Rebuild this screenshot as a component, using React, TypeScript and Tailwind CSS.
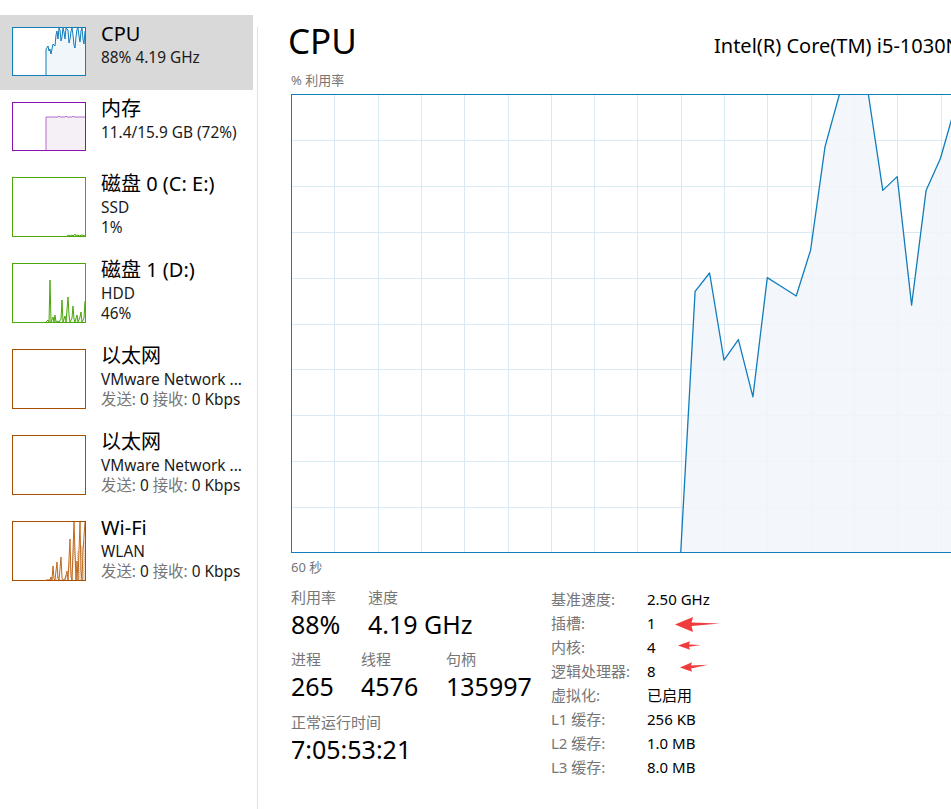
import clsx from "clsx";
import type { ReactNode } from "react";

const CHART_W = 866;
const CHART_H = 459;

// one sample per second, 60 s across the chart
const cpuHistory = [
  0, 0, 0, 0, 0, 0, 0, 0, 0, 0, 0, 0, 0, 0, 0, 0, 0, 0, 0, 0, 0, 0, 0, 0, 0, 0, 0,
  0, 57, 61, 42, 46.5, 34, 60, 58, 56, 66, 88.5, 100, 100, 100, 79, 82, 54, 79, 86,
  97, 95, 90, 93, 88, 97, 91, 86, 94, 89, 92, 87, 90, 88, 88,
];

function Thumb({
  color,
  h,
  children,
}: {
  color: string;
  h: number;
  children?: ReactNode;
}) {
  return (
    <svg width={74} height={h} className="block">
      <rect x={0} y={0} width={74} height={h} fill="#ffffff" />
      {children}
      <rect x={0.5} y={0.5} width={73} height={h - 1} fill="none" stroke={color} />
    </svg>
  );
}

const cpuThumb =
  "34,48 34,22 36,19 37,24 38,22 39,27 41,17 43,19 44,8 45,4 46,12 47,1 48,3 49,14 50,10 51,1 52,5 53,12 54,1 56,3 57,16 58,12 59,4 60,1 61,8 62,18 63,21 64,10 65,2 66,1 67,9 68,15 69,4 70,1 71,12 72,17 73,4";
const memThumb = "34,48 34,15 46,15 47,14 48,15 53,15 54,14 55,15 60,15 61,14 62,15 73,15";
const disk0Thumb = "55,59 57,58 58,59 60,58 61,59 63,57 64,59 66,58 67,59 70,58 73,59";
const disk1Thumb =
  "34,59 36,57 37,59 38,17 39,59 41,54 42,59 43,52 44,59 46,58 47,59 49,56 50,37 51,59 53,53 54,59 56,34 57,52 58,59 60,55 61,43 62,56 63,59 65,52 66,59 68,54 69,49 70,59 72,55 73,38";
const wifiThumb =
  "34,59 38,59 39,56 40,59 41,45 42,58 43,59 45,41 46,58 47,59 49,36 50,57 51,59 53,59 55,50 56,59 58,18 59,56 60,59 62,1 63,30 64,59 65,40 66,59 68,1 69,50 70,59 71,30 73,1";
const wifiThumb2 = "34,59 44,59 46,55 48,59 52,59 54,54 56,59 58,40 60,59 62,20 64,59 66,30 68,59 70,25 72,59 73,20";

function NavItem({
  selected,
  tall,
  thumb,
  title,
  children,
}: {
  selected?: boolean;
  tall?: boolean;
  thumb: ReactNode;
  title: string;
  children: ReactNode;
}) {
  return (
    <div
      className={clsx(
        "flex items-start pl-3",
        tall ? "h-[86px]" : "h-[75px]",
        selected && "bg-[#d9d9d9]"
      )}
    >
      <div className="mt-3 shrink-0">{thumb}</div>
      <div className="ml-[15px] min-w-0 pt-[7px]">
        <div className="text-[20px] leading-6 text-black whitespace-nowrap">{title}</div>
        <div className="mt-[2px] text-[15.4px] leading-5 text-[#1a1a1a] whitespace-nowrap">
          {children}
        </div>
      </div>
    </div>
  );
}

function NetLine() {
  return (
    <div>
      <span className="text-[#767676]">发送:</span> 0 <span className="text-[#767676]">接收:</span> 0 Kbps
    </div>
  );
}

function CpuChart() {
  const step = CHART_W / 60;
  const pts = cpuHistory.map((p, i) => [i * step, CHART_H - (p / 100) * CHART_H]);
  const line = pts.map(([x, y]) => `${x.toFixed(1)},${y.toFixed(1)}`).join(" ");
  const area = `0,${CHART_H} ${line} ${CHART_W},${CHART_H}`;
  const cols = Array.from({ length: 19 }, (_, k) => Math.round(((k + 1) * CHART_W) / 20) + 0.5);
  const rows = Array.from({ length: 9 }, (_, k) => Math.round(((k + 1) * CHART_H) / 10) + 0.5);

  return (
    <svg width={CHART_W} height={CHART_H} className="block shrink-0">
      <rect width={CHART_W} height={CHART_H} fill="#ffffff" />
      {cols.map((x) => (
        <line key={`c${x}`} x1={x} x2={x} y1={0} y2={CHART_H} stroke="#d9eaf4" />
      ))}
      {rows.map((y) => (
        <line key={`r${y}`} x1={0} x2={CHART_W} y1={y} y2={y} stroke="#d9eaf4" />
      ))}
      <polygon points={area} fill="#f1f6fa" fillOpacity={0.85} />
      <polyline points={line} fill="none" stroke="#117dbb" strokeWidth={1.3} strokeLinejoin="round" />
      <rect x={0.5} y={0.5} width={CHART_W - 1} height={CHART_H - 1} fill="none" stroke="#117dbb" />
    </svg>
  );
}

function Stat({ label, value, w }: { label: string; value: string; w?: string }) {
  return (
    <div className={w}>
      <div className="text-[15px] leading-[21px] text-[#767676]">{label}</div>
      <div className="text-[25px] leading-8 text-black whitespace-nowrap">{value}</div>
    </div>
  );
}

const specs: [string, string][] = [
  ["基准速度:", "2.50 GHz"],
  ["插槽:", "1"],
  ["内核:", "4"],
  ["逻辑处理器:", "8"],
  ["虚拟化:", "已启用"],
  ["L1 缓存:", "256 KB"],
  ["L2 缓存:", "1.0 MB"],
  ["L3 缓存:", "8.0 MB"],
];

export default function App() {
  return (
    <div className="relative flex h-[809px] w-[951px] overflow-hidden bg-white font-['Noto_Sans','Noto_Sans_CJK_SC',sans-serif]">
      {/* sidebar */}
      <div className="w-[253px] shrink-0 pt-[15px]">
        <NavItem
          selected
          title="CPU"
          thumb={
            <Thumb color="#117dbb" h={49}>
              <polygon points={`${cpuThumb} 73,48`} fill="#f1f6fa" />
              <polyline points={cpuThumb} fill="none" stroke="#117dbb" strokeWidth={1} />
            </Thumb>
          }
        >
          88% 4.19 GHz
        </NavItem>
        <NavItem
          title="内存"
          thumb={
            <Thumb color="#8b12ae" h={49}>
              <polygon points={`${memThumb} 73,48`} fill="#f4f0f5" />
              <polyline points={memThumb} fill="none" stroke="#8b12ae" strokeWidth={1} opacity={0.6} />
            </Thumb>
          }
        >
          11.4/15.9 GB (72%)
        </NavItem>
        <NavItem
          tall
          title="磁盘 0 (C: E:)"
          thumb={
            <Thumb color="#4da60c" h={60}>
              <polyline points={disk0Thumb} fill="none" stroke="#4da60c" strokeWidth={1} />
            </Thumb>
          }
        >
          <div>SSD</div>
          <div>1%</div>
        </NavItem>
        <NavItem
          tall
          title="磁盘 1 (D:)"
          thumb={
            <Thumb color="#4da60c" h={60}>
              <polygon points={`${disk1Thumb} 73,59`} fill="#eff7e9" />
              <polyline points={disk1Thumb} fill="none" stroke="#4da60c" strokeWidth={1} />
            </Thumb>
          }
        >
          <div>HDD</div>
          <div>46%</div>
        </NavItem>
        <NavItem tall title="以太网" thumb={<Thumb color="#a74f01" h={60} />}>
          <div>VMware Network ...</div>
          <NetLine />
        </NavItem>
        <NavItem tall title="以太网" thumb={<Thumb color="#a74f01" h={60} />}>
          <div>VMware Network ...</div>
          <NetLine />
        </NavItem>
        <NavItem
          tall
          title="Wi-Fi"
          thumb={
            <Thumb color="#a74f01" h={60}>
              <polyline points={wifiThumb2} fill="none" stroke="#d9a275" strokeWidth={1} strokeDasharray="1 1" />
              <polyline points={wifiThumb} fill="none" stroke="#c06a1e" strokeWidth={1} />
            </Thumb>
          }
        >
          <div>WLAN</div>
          <NetLine />
        </NavItem>
      </div>

      <div className="ml-1 mt-[27px] w-px shrink-0 self-stretch bg-[#e2e2e2]" />

      {/* details panel */}
      <div className="flex shrink-0 flex-col pl-[33px] pt-[19px]">
        <div className="flex items-start">
          <div className="-ml-[3px] w-[426px] text-[35px] leading-[44px] text-black">CPU</div>
          <div className="mt-[15px] whitespace-nowrap text-[20px] leading-6 text-black">
            Intel(R) Core(TM) i5-1030NG7 CPU @ 1.10GHz
          </div>
        </div>
        <div className="mt-[9px] text-[13px] leading-4 text-[#767676]">% 利用率</div>
        <div className="mt-[6px]">
          <CpuChart />
        </div>
        <div className="mt-[6px] text-[13px] leading-4 text-[#767676]">60 秒</div>

        <div className="mt-3 flex">
          <div className="w-[260px] shrink-0">
            <div className="flex">
              <Stat label="利用率" value="88%" w="w-[77px]" />
              <Stat label="速度" value="4.19 GHz" />
            </div>
            <div className="mt-[9px] flex">
              <Stat label="进程" value="265" w="w-[70px]" />
              <Stat label="线程" value="4576" w="w-[85px]" />
              <Stat label="句柄" value="135997" />
            </div>
            <div className="mt-[10px]">
              <Stat label="正常运行时间" value="7:05:53:21" />
            </div>
          </div>
          <div className="flex flex-col">
            {specs.map(([k, v]) => (
              <div key={k} className="flex text-[15px] leading-6">
                <div className="w-24 text-[#767676]">{k}</div>
                <div className="text-black">{v}</div>
              </div>
            ))}
          </div>
        </div>
      </div>

      {/* red annotation arrows */}
      <svg className="pointer-events-none absolute left-[670px] top-[610px]" width={60} height={70}>
        <g fill="#f03c3c">
          <polygon points="5,14.5 23,7 21.5,12.4 50,13.6 21.5,16 23,22" />
          <polygon points="8,35.5 20,31.3 19,34.4 31,35 19,36.7 20,39.7" />
          <polygon points="10,57.5 22,52.3 21,55.6 38,54.8 21,58.5 22,61.7" />
        </g>
      </svg>
    </div>
  );
}
